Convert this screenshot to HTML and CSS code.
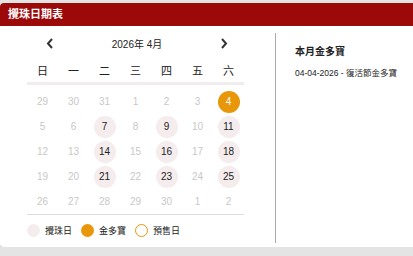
FILE: index.html
```html
<!DOCTYPE html>
<html lang="zh-Hant">
<head>
  <meta charset="UTF-8">
  <title>攪珠日期表</title>
  <link rel="stylesheet" href="styles.css">
</head>
<body>
  <div class="panel">
    <div class="panel-head">攪珠日期表</div>

    <div class="panel-body">
      <div class="calendar">
        <div class="cal-nav">
          <svg class="arrow" width="8" height="11" viewBox="0 0 8 11"><path d="M6 1 L2 5.5 L6 10" fill="none" stroke="#333" stroke-width="2"/></svg>
          <span class="cal-title">2026年 4月</span>
          <svg class="arrow" width="8" height="11" viewBox="0 0 8 11"><path d="M2 1 L6 5.5 L2 10" fill="none" stroke="#333" stroke-width="2"/></svg>
        </div>

        <div class="weekdays">
          <span>日</span><span>一</span><span>二</span><span>三</span><span>四</span><span>五</span><span>六</span>
        </div>

        <div class="days">
          <span class="day">29</span><span class="day">30</span><span class="day">31</span><span class="day">1</span><span class="day">2</span><span class="day">3</span><span class="day jackpot">4</span>
          <span class="day">5</span><span class="day">6</span><span class="day draw">7</span><span class="day">8</span><span class="day draw">9</span><span class="day">10</span><span class="day draw">11</span>
          <span class="day">12</span><span class="day">13</span><span class="day draw">14</span><span class="day">15</span><span class="day draw">16</span><span class="day">17</span><span class="day draw">18</span>
          <span class="day">19</span><span class="day">20</span><span class="day draw">21</span><span class="day">22</span><span class="day draw">23</span><span class="day">24</span><span class="day draw">25</span>
          <span class="day">26</span><span class="day">27</span><span class="day">28</span><span class="day">29</span><span class="day">30</span><span class="day">1</span><span class="day">2</span>
        </div>

        <div class="legend">
          <span class="dot dot-draw"></span><span class="legend-label">攪珠日</span>
          <span class="dot dot-jackpot"></span><span class="legend-label">金多寶</span>
          <span class="dot dot-presale"></span><span class="legend-label">預售日</span>
        </div>
      </div>

      <div class="jackpot-info">
        <h4>本月金多寶</h4>
        <p>04-04-2026 - 復活節金多寶</p>
      </div>
    </div>
  </div>
</body>
</html>
```

FILE: styles.css
```css
body {
  margin: 0;
  padding-top: 3px;
  background: #e4e4e4;
  overflow: hidden;
  font-family: "Liberation Sans", "Noto Sans CJK TC", sans-serif;
  color: #222;
}
.panel {
  height: 244px;
  background: #fff;
  border-radius: 4px 0 0 4px;
  box-shadow: 0 2px 3px rgba(0,0,0,0.08);
}
.panel-head {
  height: 23px;
  line-height: 23px;
  padding-left: 8px;
  background: #9c0909;
  color: #fff;
  font-size: 11px;
  font-weight: bold;
  border-radius: 4px 0 0 0;
}
.panel-body {
  display: flex;
  padding-top: 7px;
}
.calendar {
  margin-left: 27px;
  width: 217px;
}
.cal-nav {
  height: 20px;
  display: flex;
  align-items: center;
  justify-content: space-between;
  padding: 0 16px 0 19px;
}
.cal-title {
  font-size: 10px;
}
.weekdays {
  display: grid;
  grid-template-columns: repeat(7, 31px);
  height: 24px;
  margin-top: 5px;
  align-items: center;
  font-size: 11px;
  text-align: center;
  border-bottom: 3px solid #efeded;
}
.days {
  display: grid;
  grid-template-columns: repeat(7, 31px);
  grid-auto-rows: 25px;
  margin-top: 4px;
  font-size: 10px;
  border-bottom: 1px solid #dedede;
}
.day {
  justify-self: center;
  align-self: center;
  width: 22px;
  height: 22px;
  line-height: 22px;
  text-align: center;
  border-radius: 50%;
  color: #c8c8c8;
}
.day.draw {
  background: #f5eced;
  color: #222;
}
.day.jackpot {
  background: #e8960a;
  color: #fff;
}
.legend {
  display: flex;
  align-items: center;
  height: 30px;
  font-size: 9px;
}
.dot {
  width: 13px;
  height: 13px;
  border-radius: 50%;
  box-sizing: border-box;
  margin-right: 5px;
}
.dot-draw {
  background: #f5eced;
}
.dot-jackpot {
  background: #e8960a;
}
.dot-presale {
  border: 1px solid #e8960a;
}
.legend-label {
  margin-right: 9px;
}
.jackpot-info {
  margin-left: 31px;
  height: 210px;
  border-left: 1px solid #aaa;
  padding-left: 19px;
}
.jackpot-info h4 {
  margin: 10px 0 0;
  font-size: 10px;
  font-weight: bold;
}
.jackpot-info p {
  margin: 8px 0 0;
  font-size: 8.5px;
}
```
